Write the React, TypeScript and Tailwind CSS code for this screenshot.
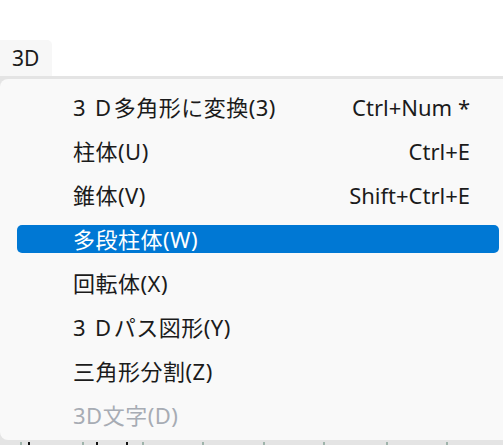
import React from 'react'

type Item = {
  label: React.ReactNode
  key: string
  shortcut?: string
  active?: boolean
  disabled?: boolean
}

// spaced "3 D" prefix as drawn by the native menu font
const ThreeD = () => (
  <>
    <span>3</span>
    <span className="ml-[9px] mr-[2px]">D</span>
  </>
)

const items: Item[] = [
  { key: 'a', label: <><ThreeD />多角形に変換(3)</>, shortcut: 'Ctrl+Num *' },
  { key: 'b', label: '柱体(U)', shortcut: 'Ctrl+E' },
  { key: 'c', label: '錐体(V)', shortcut: 'Shift+Ctrl+E' },
  { key: 'd', label: '多段柱体(W)', active: true },
  { key: 'e', label: '回転体(X)' },
  { key: 'f', label: <><ThreeD />パス図形(Y)</> },
  { key: 'g', label: '三角形分割(Z)' },
  { key: 'h', label: '3D文字(D)', disabled: true },
]

const ticks = [
  { x: 20, dark: false },
  { x: 28, dark: true },
  { x: 82, dark: false },
  { x: 96, dark: true },
  { x: 126, dark: true },
  { x: 142, dark: false },
  { x: 202, dark: false },
  { x: 263, dark: false },
  { x: 323, dark: false },
  { x: 386, dark: false },
  { x: 446, dark: false },
]

const MenuRow = ({ item }: { item: Item }) => {
  let cls = 'text-[#1b1b1b]'
  if (item.active) cls = 'bg-[#0078d4] text-white'
  if (item.disabled) cls = 'text-[#a7acb4]'
  return (
    <div className="h-[44px] py-[8px] pl-[17px]">
      <div className={`h-[28px] w-[482px] rounded-[5px] flex items-center justify-between pl-[56px] pr-[29px] ${cls}`}>
        <span className="flex items-center tracking-[0.5px]">{item.label}</span>
        {item.shortcut && <span>{item.shortcut}</span>}
      </div>
    </div>
  )
}

export default function App() {
  return (
    <div
      className="w-[503px] h-[445px] bg-white flex flex-col overflow-hidden text-[22px] leading-none"
      style={{ fontFamily: '"Noto Sans", "Noto Sans CJK JP", sans-serif' }}
    >
      <div className="h-[40px] shrink-0" />
      <div className="h-[36px] w-[52px] shrink-0 bg-[#f7f7f7] rounded-tr-[5px] flex items-center pl-[12px] text-[21px] text-[#1b1b1b]">
        3D
      </div>
      <div className="flex-1 bg-[#e4e4e4] pt-[3px] flex flex-col">
        <div className="w-[520px] h-[361px] shrink-0 bg-[#f9f9f9] rounded-[8px] pt-[6px]">
          {items.map((it) => (
            <MenuRow key={it.key} item={it} />
          ))}
        </div>
        <div className="relative flex-1">
          {ticks.map((t) => (
            <div
              key={t.x}
              className={`absolute bottom-0 h-[3px] w-[2px] ${t.dark ? 'bg-[#111111]' : 'bg-[#9fb4ab]'}`}
              style={{ left: t.x }}
            />
          ))}
        </div>
      </div>
    </div>
  )
}
